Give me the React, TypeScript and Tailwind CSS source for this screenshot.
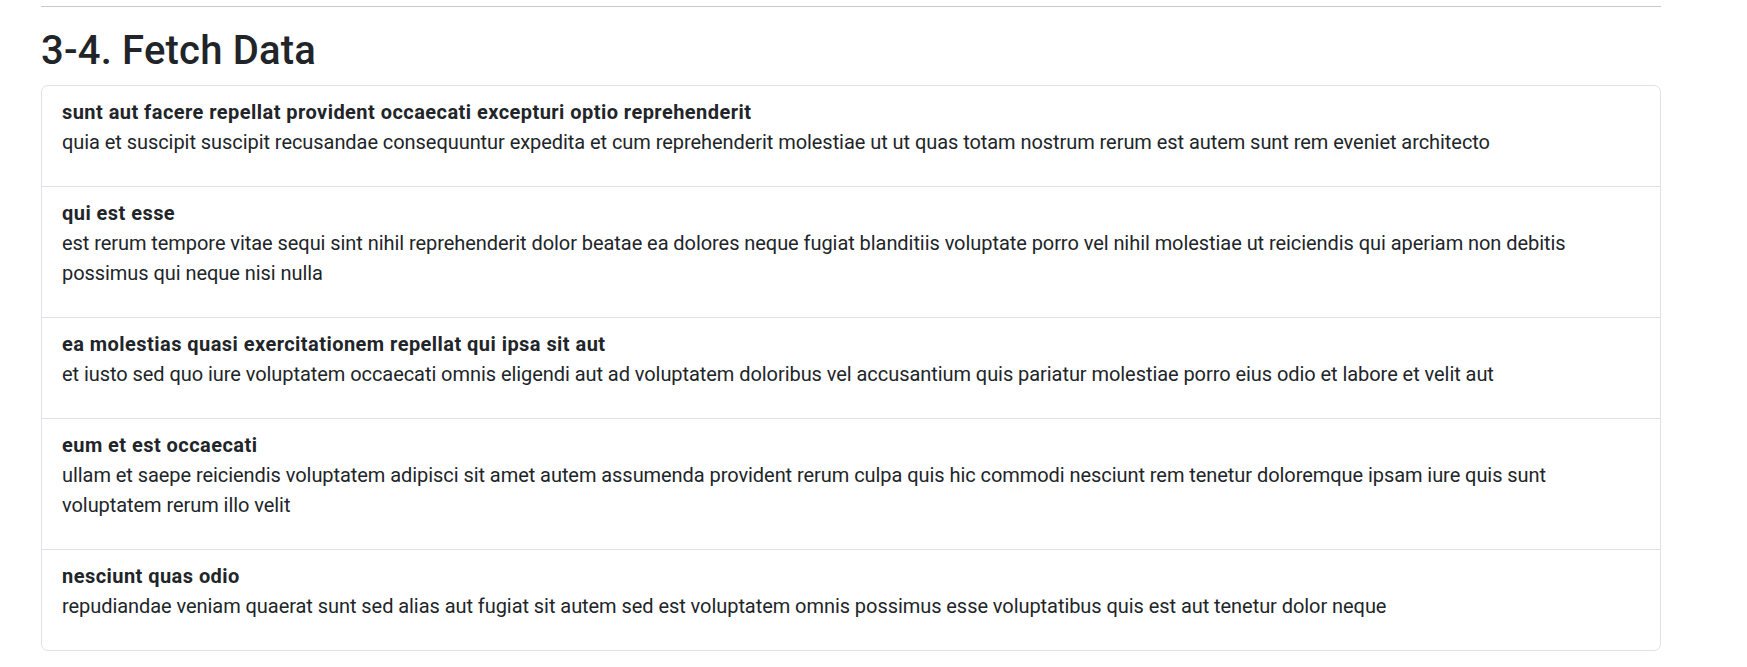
const posts = [
  {
    id: 1,
    title: 'sunt aut facere repellat provident occaecati excepturi optio reprehenderit',
    body: 'quia et suscipit suscipit recusandae consequuntur expedita et cum reprehenderit molestiae ut ut quas totam nostrum rerum est autem sunt rem eveniet architecto',
  },
  {
    id: 2,
    title: 'qui est esse',
    body: 'est rerum tempore vitae sequi sint nihil reprehenderit dolor beatae ea dolores neque fugiat blanditiis voluptate porro vel nihil molestiae ut reiciendis qui aperiam non debitis possimus qui neque nisi nulla',
  },
  {
    id: 3,
    title: 'ea molestias quasi exercitationem repellat qui ipsa sit aut',
    body: 'et iusto sed quo iure voluptatem occaecati omnis eligendi aut ad voluptatem doloribus vel accusantium quis pariatur molestiae porro eius odio et labore et velit aut',
  },
  {
    id: 4,
    title: 'eum et est occaecati',
    body: 'ullam et saepe reiciendis voluptatem adipisci sit amet autem assumenda provident rerum culpa quis hic commodi nesciunt rem tenetur doloremque ipsam iure quis sunt voluptatem rerum illo velit',
  },
  {
    id: 5,
    title: 'nesciunt quas odio',
    body: 'repudiandae veniam quaerat sunt sed alias aut fugiat sit autem sed est voluptatem omnis possimus esse voluptatibus quis est aut tenetur dolor neque',
  },
];

export default function App() {
  return (
    <div className="min-h-screen bg-white pl-[41px] pt-[6px] text-[#212529] font-['Segoe_UI',Roboto,'Liberation_Sans',sans-serif]">
      <div className="w-[1620px]">
        <hr className="border-0 border-t border-[#c8c9ca] m-0" />

        {/* 3-4 section */}
        <h1 className="mt-[20px] mb-[10px] text-[40px] leading-[48px] font-medium tracking-[0.2px]">3-4. Fetch Data</h1>

        <ul className="border border-[#dee2e6] rounded-[7px] bg-white">
          {posts.map((post, i) => (
            <li
              key={post.id}
              className={`px-[20px] pt-[11px] pb-[9px] text-[20px] leading-[30px] ${i > 0 ? 'border-t border-[#dee2e6]' : ''}`}
            >
              <div className="font-bold tracking-[0.45px]">{post.title}</div>
              <p className="mb-[20px] tracking-[-0.06px]">{post.body}</p>
            </li>
          ))}
        </ul>
      </div>
    </div>
  );
}
